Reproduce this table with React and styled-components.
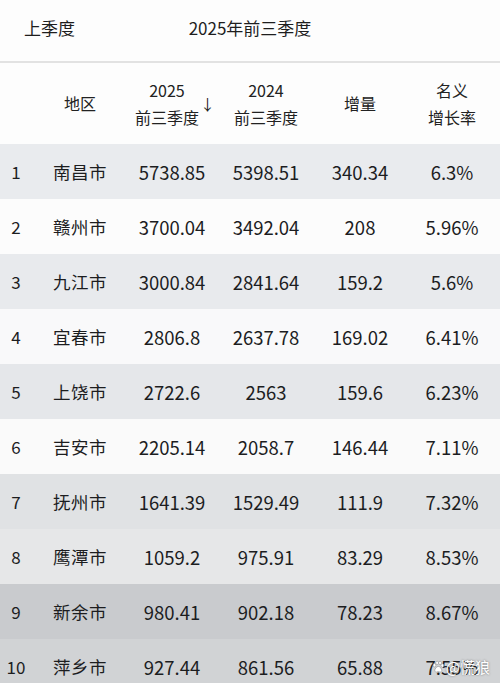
import React from 'react';
import styled, { createGlobalStyle } from 'styled-components';

const rows = [
  ['1', '南昌市', '5738.85', '5398.51', '340.34', '6.3%'],
  ['2', '赣州市', '3700.04', '3492.04', '208', '5.96%'],
  ['3', '九江市', '3000.84', '2841.64', '159.2', '5.6%'],
  ['4', '宜春市', '2806.8', '2637.78', '169.02', '6.41%'],
  ['5', '上饶市', '2722.6', '2563', '159.6', '6.23%'],
  ['6', '吉安市', '2205.14', '2058.7', '146.44', '7.11%'],
  ['7', '抚州市', '1641.39', '1529.49', '111.9', '7.32%'],
  ['8', '鹰潭市', '1059.2', '975.91', '83.29', '8.53%'],
  ['9', '新余市', '980.41', '902.18', '78.23', '8.67%'],
  ['10', '萍乡市', '927.44', '861.56', '65.88', '7.55%'],
];

// photo of a screen: bands get darker toward the bottom
const shades = [
  '#e9ebee', '#fcfcfc', '#e8eaed', '#f9f9fa', '#e5e7ea',
  '#fafafa', '#e0e2e4', '#e6e7e8', '#c9cbce', '#d1d3d5',
];

const App = () => (
  <>
    <Global />
    <Page>
      <Tabs>
        <Tab>上季度</Tab>
        <Tab $active>2025年前三季度</Tab>
      </Tabs>
      <HeadRow>
        <HeadCell />
        <HeadCell>地区</HeadCell>
        <HeadCell>
          <Sorted>
            <span>2025<br />前三季度</span>
            <Arrow>↓</Arrow>
          </Sorted>
        </HeadCell>
        <HeadCell>2024<br />前三季度</HeadCell>
        <HeadCell>增量</HeadCell>
        <HeadCell>名义<br />增长率</HeadCell>
      </HeadRow>
      {rows.map((r, i) => (
        <Row key={r[0]} $bg={shades[i]}>
          <Index>{r[0]}</Index>
          <City>{r[1]}</City>
          <Num>{r[2]}</Num>
          <Num>{r[3]}</Num>
          <Num>{r[4]}</Num>
          <Num>{r[5]}</Num>
        </Row>
      ))}
      <Watermark>
        <svg width="14" height="14" viewBox="0 0 24 24" fill="#fff" stroke="#8a8c8e" strokeWidth="1">
          <ellipse cx="6" cy="9" rx="2.4" ry="3" />
          <ellipse cx="10.5" cy="5" rx="2.4" ry="3" />
          <ellipse cx="15.5" cy="5" rx="2.4" ry="3" />
          <ellipse cx="19.5" cy="9.5" rx="2.4" ry="3" />
          <path d="M12.5 11c-3 0-6 4-6 7 0 2 2 3 3.5 2.5 1.2-.4 1.800-.6 2.5-.6s1.3.2 2.5.6c1.5.5 3.5-.5 3.5-2.5 0-3-3-7-6-7z" />
        </svg>
        <span>@慌狼</span>
      </Watermark>
    </Page>
  </>
);

const Global = createGlobalStyle`
  html, body {
    margin: 0;
    background: #fdfdfd;
  }
  body {
    font-family: "Noto Sans CJK SC", "Noto Sans", sans-serif;
    color: #1c1d1f;
    overflow: hidden;
  }
`;

const Page = styled.div`
  position: relative;
  width: 500px;
  height: 683px;
  overflow: hidden;
  background: #fdfdfd;
`;

const Tabs = styled.div`
  display: grid;
  grid-template-columns: 146px 160px;
  align-items: center;
  height: 61px;
  padding-left: 24px;
  border-bottom: 2px solid #e2e2e2;
  box-shadow: 0 1px 2px rgba(0, 0, 0, 0.04);
`;

const Tab = styled.div`
  font-size: 17px;
  color: #1e1e1e;
  text-align: ${p => (p.$active ? 'center' : 'left')};
  padding-bottom: 6px;
`;

const cols = '32px 96px 88px 100px 88px 96px';

const HeadRow = styled.div`
  display: grid;
  grid-template-columns: ${cols};
  align-items: center;
  height: 81px;
  background: #fdfdfd;
`;

const HeadCell = styled.div`
  font-size: 16px;
  line-height: 27px;
  text-align: center;
  color: #222;
`;

const Sorted = styled.div`
  position: relative;
  display: inline-block;
  margin-left: -10px;
`;

const Arrow = styled.span`
  position: absolute;
  right: -16px;
  top: 13px;
  font-size: 15px;
`;

const Row = styled.div`
  display: grid;
  grid-template-columns: ${cols};
  align-items: center;
  height: 55px;
  background: ${p => p.$bg};
`;

const Index = styled.div`
  font-size: 17px;
  text-align: center;
`;

const City = styled.div`
  font-size: 17.5px;
  letter-spacing: 0.5px;
  text-align: center;
`;

const Num = styled.div`
  font-size: 18.5px;
  text-align: center;
`;

const Watermark = styled.div`
  position: absolute;
  right: 10px;
  bottom: 6px;
  display: flex;
  align-items: center;
  gap: 1px;
  font-size: 15px;
  color: #fff;
  text-shadow: 0 0 2px rgba(60, 60, 60, 0.7);
`;

export default App;
